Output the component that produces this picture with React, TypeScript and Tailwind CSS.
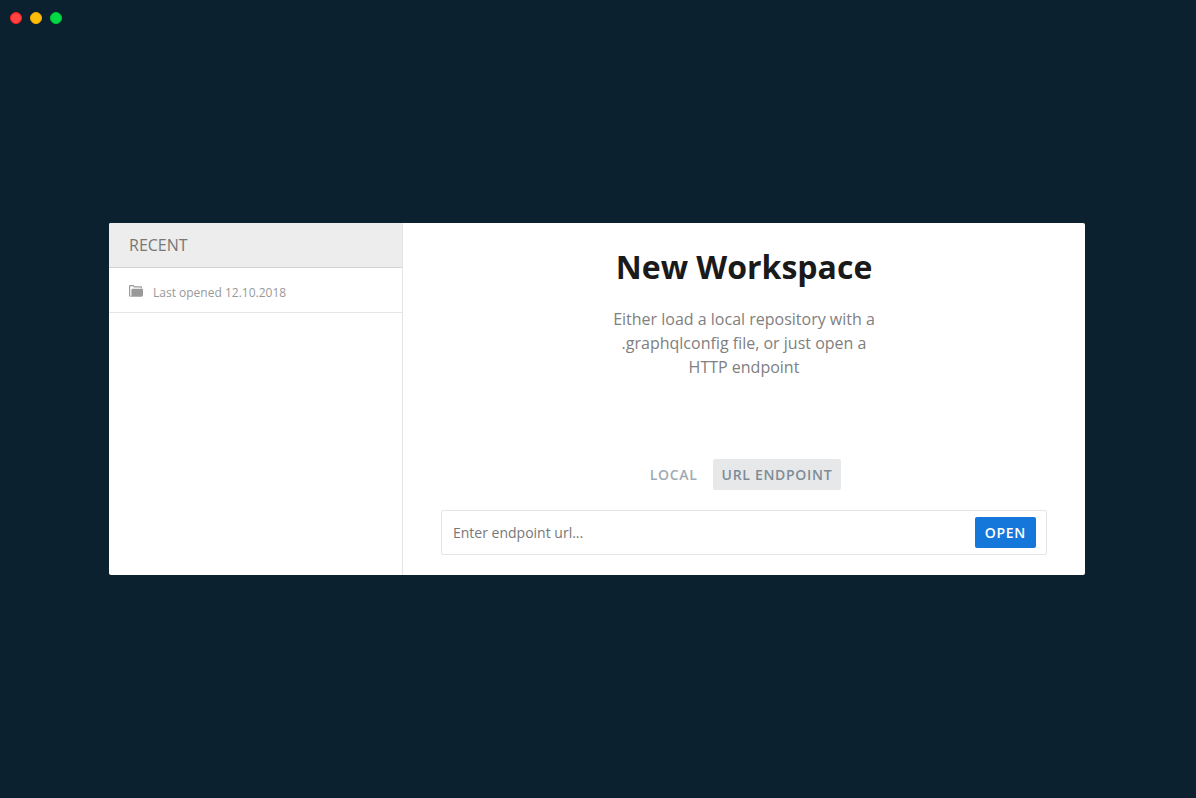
import { useState } from "react";

type Source = "local" | "url";

const trafficLights = [
  { label: "Close", className: "bg-[#ff4441] border-[#ff1a1f]" },
  { label: "Minimize", className: "bg-[#ffbd0c] border-[#ffae00]" },
  { label: "Zoom", className: "bg-[#00da43] border-[#00c93a]" },
];

const recentWorkspaces = [{ id: 1, lastOpened: "12.10.2018" }];

function FolderIcon() {
  return (
    <svg className="h-3 w-[14px] shrink-0" viewBox="0 0 14 12" fill="none" aria-hidden="true">
      <path
        d="M1.6 11.1H1.2a.6.6 0 0 1-.6-.6V1.2c0-.4.2-.6.6-.6h3l1.2 1.2h6.4c.4 0 .7.3.7.7v.7"
        stroke="#999999"
        strokeWidth="1.2"
      />
      <path
        d="M3.3 3.8h9.6c.6 0 1.1.5 1.1 1.1v5.2c0 .9-.7 1.6-1.6 1.6H1.6c.5-.2.8-.7.8-1.3V4.7c0-.5.4-.9.9-.9Z"
        fill="#999999"
      />
    </svg>
  );
}

function SourceTab({ active, onClick, children }: { active: boolean; onClick: () => void; children: string }) {
  return (
    <button
      type="button"
      aria-pressed={active}
      onClick={onClick}
      className={
        "mr-[6px] h-[31px] rounded-xs px-[9px] text-sm font-semibold tracking-wider " +
        (active ? "bg-[#e7e8ea] text-[#7f8c96]" : "text-[#a0abb3]")
      }
    >
      {children}
    </button>
  );
}

export default function App() {
  const [source, setSource] = useState<Source>("url");
  const [url, setUrl] = useState("");

  return (
    <div className="flex min-h-screen flex-col bg-[#0c212f] font-['Open_Sans',sans-serif]">
      <header className="flex h-9 items-center gap-2 px-[10px]">
        {trafficLights.map((light) => (
          <button
            key={light.label}
            type="button"
            aria-label={light.label}
            className={"size-3 rounded-full border " + light.className}
          />
        ))}
      </header>
      <main className="flex grow items-center justify-center pb-9">
        <div className="mr-0.5 flex min-h-[352px] w-full max-w-[976px] overflow-hidden rounded-xs bg-white">
          <aside className="w-[294px] shrink-0 border-r border-[#e5e5e5]">
            <h2 className="flex h-[45px] items-center border-b border-[#d2d2d2] bg-[#ededed] px-5 text-base text-[#777777]">
              RECENT
            </h2>
            <ul>
              {recentWorkspaces.map((workspace) => (
                <li key={workspace.id}>
                  <button
                    type="button"
                    className="flex h-[45px] w-full items-center gap-[10px] border-b border-[#e5e5e5] px-5 pt-0.5 text-xs text-[#999999]"
                  >
                    <FolderIcon />
                    <span className="pt-1">Last opened {workspace.lastOpened}</span>
                  </button>
                </li>
              ))}
            </ul>
          </aside>
          <section className="flex grow flex-col items-center px-[38px] pt-6 pb-5">
            <h1 className="text-[32px] leading-10 font-bold text-[#1a1a1a]">New Workspace</h1>
            <p className="mt-5 w-[280px] text-center text-base leading-6 text-[#808080]">
              Either load a local repository with a .graphqlconfig file, or just open a HTTP endpoint
            </p>
            <div className="mt-auto flex">
              <SourceTab active={source === "local"} onClick={() => setSource("local")}>
                LOCAL
              </SourceTab>
              <SourceTab active={source === "url"} onClick={() => setSource("url")}>
                URL ENDPOINT
              </SourceTab>
            </div>
            <form
              onSubmit={(event) => event.preventDefault()}
              className="mt-5 flex h-[45px] w-full items-center rounded-xs border border-[#e5e5e5] pr-[10px] pl-[11px]"
            >
              <input
                type="text"
                aria-label="Endpoint URL"
                placeholder="Enter endpoint url..."
                value={url}
                onChange={(event) => setUrl(event.target.value)}
                className="min-w-0 grow text-sm text-[#333333] outline-none placeholder:text-[#777777]"
              />
              <button
                type="submit"
                className="h-[31px] rounded-xs bg-[#1577da] px-[10px] text-sm font-semibold tracking-wider text-white"
              >
                OPEN
              </button>
            </form>
          </section>
        </div>
      </main>
    </div>
  );
}
